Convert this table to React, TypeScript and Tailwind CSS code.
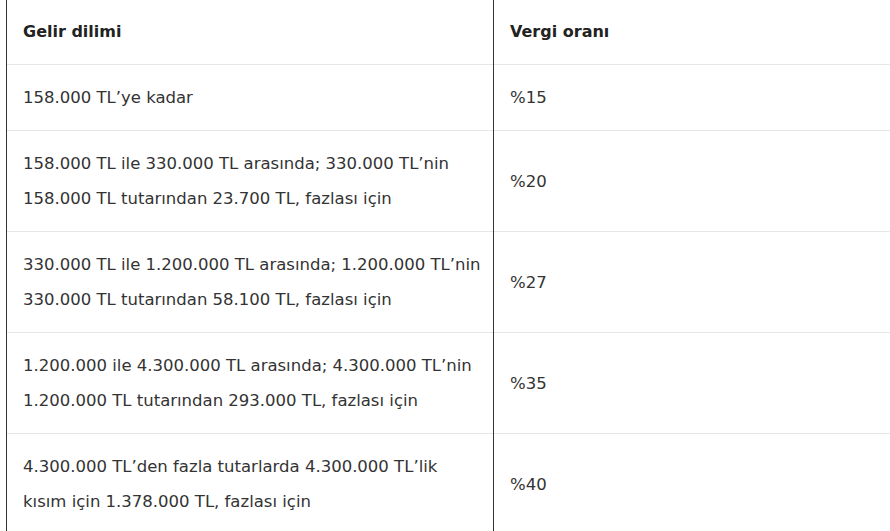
const rows: [string[], string][] = [
  [["158.000 TL’ye kadar"], "%15"],
  [["158.000 TL ile 330.000 TL arasında; 330.000 TL’nin", "158.000 TL tutarından 23.700 TL, fazlası için"], "%20"],
  [["330.000 TL ile 1.200.000 TL arasında; 1.200.000 TL’nin", "330.000 TL tutarından 58.100 TL, fazlası için"], "%27"],
  [["1.200.000 ile 4.300.000 TL arasında; 4.300.000 TL’nin", "1.200.000 TL tutarından 293.000 TL, fazlası için"], "%35"],
  [["4.300.000 TL’den fazla tutarlarda 4.300.000 TL’lik", "kısım için 1.378.000 TL, fazlası için"], "%40"],
];

export default function App() {
  return (
    <div className="w-[890px] h-[531px] overflow-hidden bg-white pl-[6px] font-['DejaVu_Sans',sans-serif] text-[#333333]">
      <table className="w-[900px] table-fixed border-collapse text-[16.5px] leading-[35px]">
        <colgroup>
          <col className="w-[487px]" />
          <col />
        </colgroup>
        <thead>
          <tr className="border-b border-[#e6e6e6]">
            <th className="border-l border-l-[#333333] pl-[16px] pt-[14px] pb-[15px] text-left text-[16px] font-bold text-[#222222]">Gelir dilimi</th>
            <th className="border-l border-l-[#333333] pl-[16px] pt-[14px] pb-[15px] text-left text-[16px] font-bold text-[#222222]">Vergi oranı</th>
          </tr>
        </thead>
        <tbody>
          {rows.map(([lines, rate], i) => (
            <tr key={i} className="border-b border-[#e6e6e6]">
              <td className="border-l border-l-[#333333] pl-[16px] py-[15px] align-middle">
                {lines.map((l, j) => (
                  <div key={j} className="whitespace-nowrap">{l}</div>
                ))}
              </td>
              <td className="border-l border-l-[#333333] pl-[16px] py-[15px] align-middle">{rate}</td>
            </tr>
          ))}
        </tbody>
      </table>
    </div>
  );
}
